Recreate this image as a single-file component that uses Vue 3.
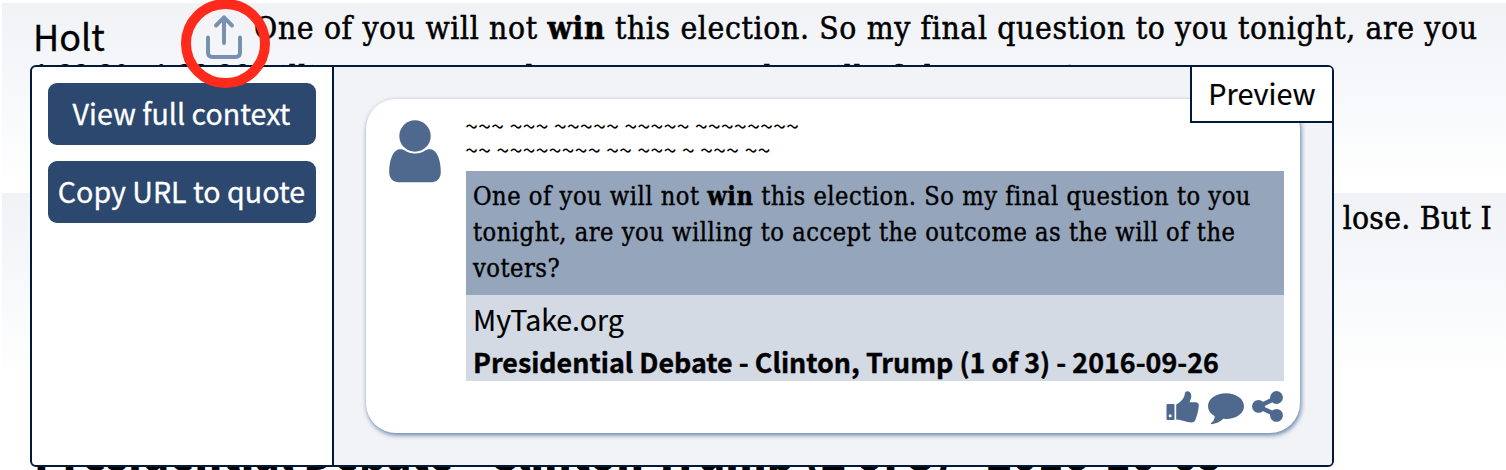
<script setup>
const quoteLines = [
  { id: 'q1', parts: ['One of you will not ', 'win', ' this election. So my final question to you'] },
  { id: 'q2', parts: ['tonight, are you willing to accept the outcome as the will of the', '', ''] },
  { id: 'q3', parts: ['voters?', '', ''] },
]
</script>

<template>
  <main class="page">
    <section class="row first">
      <div class="speaker">
        <span class="name">Holt</span>
        <span class="time">1:33:30 - 1:33:36</span>
      </div>
      <div class="speech">
        <span class="line l1">One of you will not <b>win</b> this election. So my final question to you tonight, are you</span>
        <span class="line l2">willing to accept the outcome as the will of the voters?</span>
      </div>
    </section>
    <section class="row second">
      <span class="line l3">lose. But I</span>
    </section>
    <h2 class="heading">Presidential Debate - Clinton Trump (2 of 3) - 2016-10-09</h2>

    <div class="popup">
      <div class="actions">
        <button class="btn"><span class="b1">View full context</span></button>
        <button class="btn"><span class="b2">Copy URL to quote</span></button>
      </div>
      <div class="preview">
        <article class="card">
          <svg class="avatar" width="52" height="63" viewBox="0 0 52 63">
            <circle cx="26" cy="16" r="15.7" />
            <path d="M10 29.2C12 29 14.500 29.300 15.500 30.300C21.500 34.700 30.500 34.700 36.500 30.300C37.500 29.300 40 29 42 29.200C49 30.500 51.800 42 51.800 52C51.800 58.500 48 62.300 42 62.300H10C4 62.300.200 58.500.200 52C.200 42 3 30.500 10 29.200Z" />
          </svg>
          <div class="body">
            <div class="tildes t1">~~~ ~~~ ~~~~~ ~~~~~ ~~~~~~~~</div>
            <div class="tildes t2">~~ ~~~~~~~~ ~~ ~~~ ~ ~~~ ~~</div>
            <blockquote class="quote">
              <div v-for="l in quoteLines" :key="l.id" class="qline"><span :class="l.id">{{ l.parts[0] }}<b>{{ l.parts[1] }}</b>{{ l.parts[2] }}</span></div>
            </blockquote>
            <div class="source">
              <div class="site"><span>MyTake.org</span></div>
              <div class="title"><span>Presidential Debate - Clinton, Trump (1 of 3) - 2016-09-26</span></div>
            </div>
            <div class="social">
              <svg width="33" height="32" viewBox="0 0 33 32">
                <path fill-rule="evenodd" d="M1.500 13H7.500Q8.500 13 8.500 14V28Q8.500 29 7.500 29H1.500Q.500 29 .500 28V14Q.500 13 1.500 13ZM4.200 23.200A1.500 1.500 0 1 0 4.200 26.200A1.500 1.500 0 1 0 4.200 23.200Z" />
                <path d="M10.200 13.500C14 12 18.500 7 18.700 3.500C18.800 1.500 19.700.300 21.300.300C23.700.300 25.300 2.200 25.300 5C25.300 7.500 24 9.700 23.500 11.200H29.500C31.700 11.200 32.900 12.500 32.800 14.300C32.500 19 31.300 24.200 29.500 28.500C28.900 30.500 27.500 31.500 25.300 31.500C20.500 31.500 15.500 28.600 10.200 28.600Z" />
              </svg>
              <svg class="comment" width="36" height="34" viewBox="0 0 36 34">
                <path transform="translate(0 2)" d="M18 .300C28 .300 36 5.800 36 13.200C36 20.600 28 25.900 18 25.900Q16.500 25.900 15.300 25.800Q10.500 30.600 3.300 31.200Q2.500 31 3 30.300Q6.500 27.500 6.800 23.200Q0 19.200 0 13.200C0 5.800 8 .300 18 .300Z" />
              </svg>
              <svg width="31" height="31" viewBox="0 0 31 31">
                <path d="M25 6.500L6.500 15.500L25 24.500" fill="none" stroke="#4e698d" stroke-width="4.500" />
                <circle cx="24.500" cy="6.500" r="6.400" /><circle cx="6.500" cy="15.400" r="6.400" /><circle cx="24.500" cy="24.400" r="6.400" />
              </svg>
            </div>
          </div>
        </article>
        <div class="tab"><span>Preview</span></div>
      </div>
    </div>

    <div class="marker">
      <svg width="38" height="46" viewBox="0 0 38 46">
        <path d="M3 23.500V38.500Q3 43 7.500 43H30.500Q35 43 35 38.500V23.500M19 29V3.500M11 11.500L19 3.300L27 11.500" />
      </svg>
    </div>
  </main>
</template>

<style scoped>
.page {
  position: relative;
  width: 1506px;
  height: 470px;
  overflow: hidden;
  box-sizing: border-box;
  padding: 3px 0 0 2px;
  background: #fff;
  color: #000;
  font-family: "Noto Sans CJK SC", "Noto Sans", sans-serif;
}
.row {
  display: flex;
  height: 190px;
  background: linear-gradient(#f1f2f6, #f9fafc 60%, #fff 97%);
  white-space: nowrap;
}
.speaker { width: 252px; padding-left: 31px; box-sizing: border-box; display: flex; flex-direction: column; }
.name { font-size: 36px; line-height: 44px; padding-top: 10px; -webkit-text-stroke: 0.300px #000; }
.time { font-size: 29px; line-height: 36px; margin-top: -3px; }
.speech { display: flex; flex-direction: column; }
.line {
  font-family: "DejaVu Serif Condensed", "DejaVu Serif", serif;
  font-stretch: condensed;
  font-size: 31.500px;
  letter-spacing: 0.660px;
  line-height: 50px;
  -webkit-text-stroke: 0.500px #000;
}
.l1, .l2 { height: 49px; }
.second { justify-content: flex-end; padding-right: 14px; }
.l3 { letter-spacing: 0.300px; }
.heading { margin: 39px 0 0 32px; font-size: 42px; line-height: 60px; font-weight: 900; white-space: nowrap; }
.popup {
  position: absolute;
  left: 30px;
  top: 65px;
  width: 1304px;
  height: 402px;
  box-sizing: border-box;
  border: 2px solid #001a38;
  border-radius: 6px;
  background: #fff;
  display: flex;
  overflow: hidden;
}
.actions {
  width: 302px;
  box-sizing: border-box;
  padding: 16px;
  border-right: 2px solid #001a38;
  display: flex;
  flex-direction: column;
  gap: 16px;
}
.btn {
  height: 62px;
  width: 268px;
  padding: 0 1px 0 0;
  border: 0;
  border-radius: 9px;
  background: #2c486e;
  color: #fff;
  font: 28.600px/60px "Noto Sans CJK SC", sans-serif;
  -webkit-text-stroke: 0.300px #fff;
  white-space: nowrap;
  display: flex;
  justify-content: center;
}
.preview { flex: 1; position: relative; background: #f2f3f7; padding: 32px 32px; }
.card {
  width: 934px;
  height: 334px;
  box-sizing: border-box;
  border-radius: 30px;
  background: #fff;
  box-shadow: 1px 2px 5px #5c7ba3;
  display: flex;
  padding: 21px 16px 0 23px;
}
.avatar { fill: #4e698d; margin-right: 25px; flex: none; }
.body { width: 818px; }
.tildes { font-size: 23.500px; line-height: 10px; height: 24px; white-space: nowrap; text-indent: -1px; }
.t2 { margin-bottom: 3px; }
.quote {
  margin: 0;
  height: 124px;
  box-sizing: border-box;
  padding: 7px 0 0 7px;
  background: #95a5bb;
  font: 25.200px/36px "DejaVu Serif Condensed", "DejaVu Serif", serif;
  font-stretch: condensed;
  letter-spacing: 0.510px;
  -webkit-text-stroke: 0.400px #000;
  white-space: nowrap;
}
.qline { height: 36px; }
.source { height: 86px; background: #d3dae4; padding-left: 7px; white-space: nowrap; box-sizing: border-box; }
.site { font-size: 28.500px; line-height: 48px; height: 46px; -webkit-text-stroke: 0.200px #000; }
.title { font-size: 26.850px; font-weight: 700; line-height: 42px; height: 40px; -webkit-text-stroke: 0.400px #000; }
.social { display: flex; justify-content: flex-end; align-items: flex-start; padding: 10px 1px 0 0; fill: #4e698d; }
.comment { margin: 0 8px 0 9px; }
.tab {
  position: absolute;
  right: 0;
  top: 0;
  width: 142px;
  height: 56px;
  box-sizing: border-box;
  border-left: 2px solid #001a38;
  border-bottom: 2px solid #001a38;
  background: #fff;
  font-size: 28.800px;
  line-height: 52px;
  text-align: center;
  -webkit-text-stroke: 0.200px #000;
}
.marker {
  position: absolute;
  left: 181px;
  top: -1px;
  width: 89px;
  height: 89px;
  box-sizing: border-box;
  border: 10px solid #fe2b1c;
  border-radius: 50%;
}
.marker svg {
  display: block;
  margin: 5px 0 0 14px;
  fill: none;
  stroke: #7a90b0;
  stroke-width: 4;
  stroke-linecap: round;
  stroke-linejoin: round;
}
</style>

<style>
body { margin: 0; }
</style>
